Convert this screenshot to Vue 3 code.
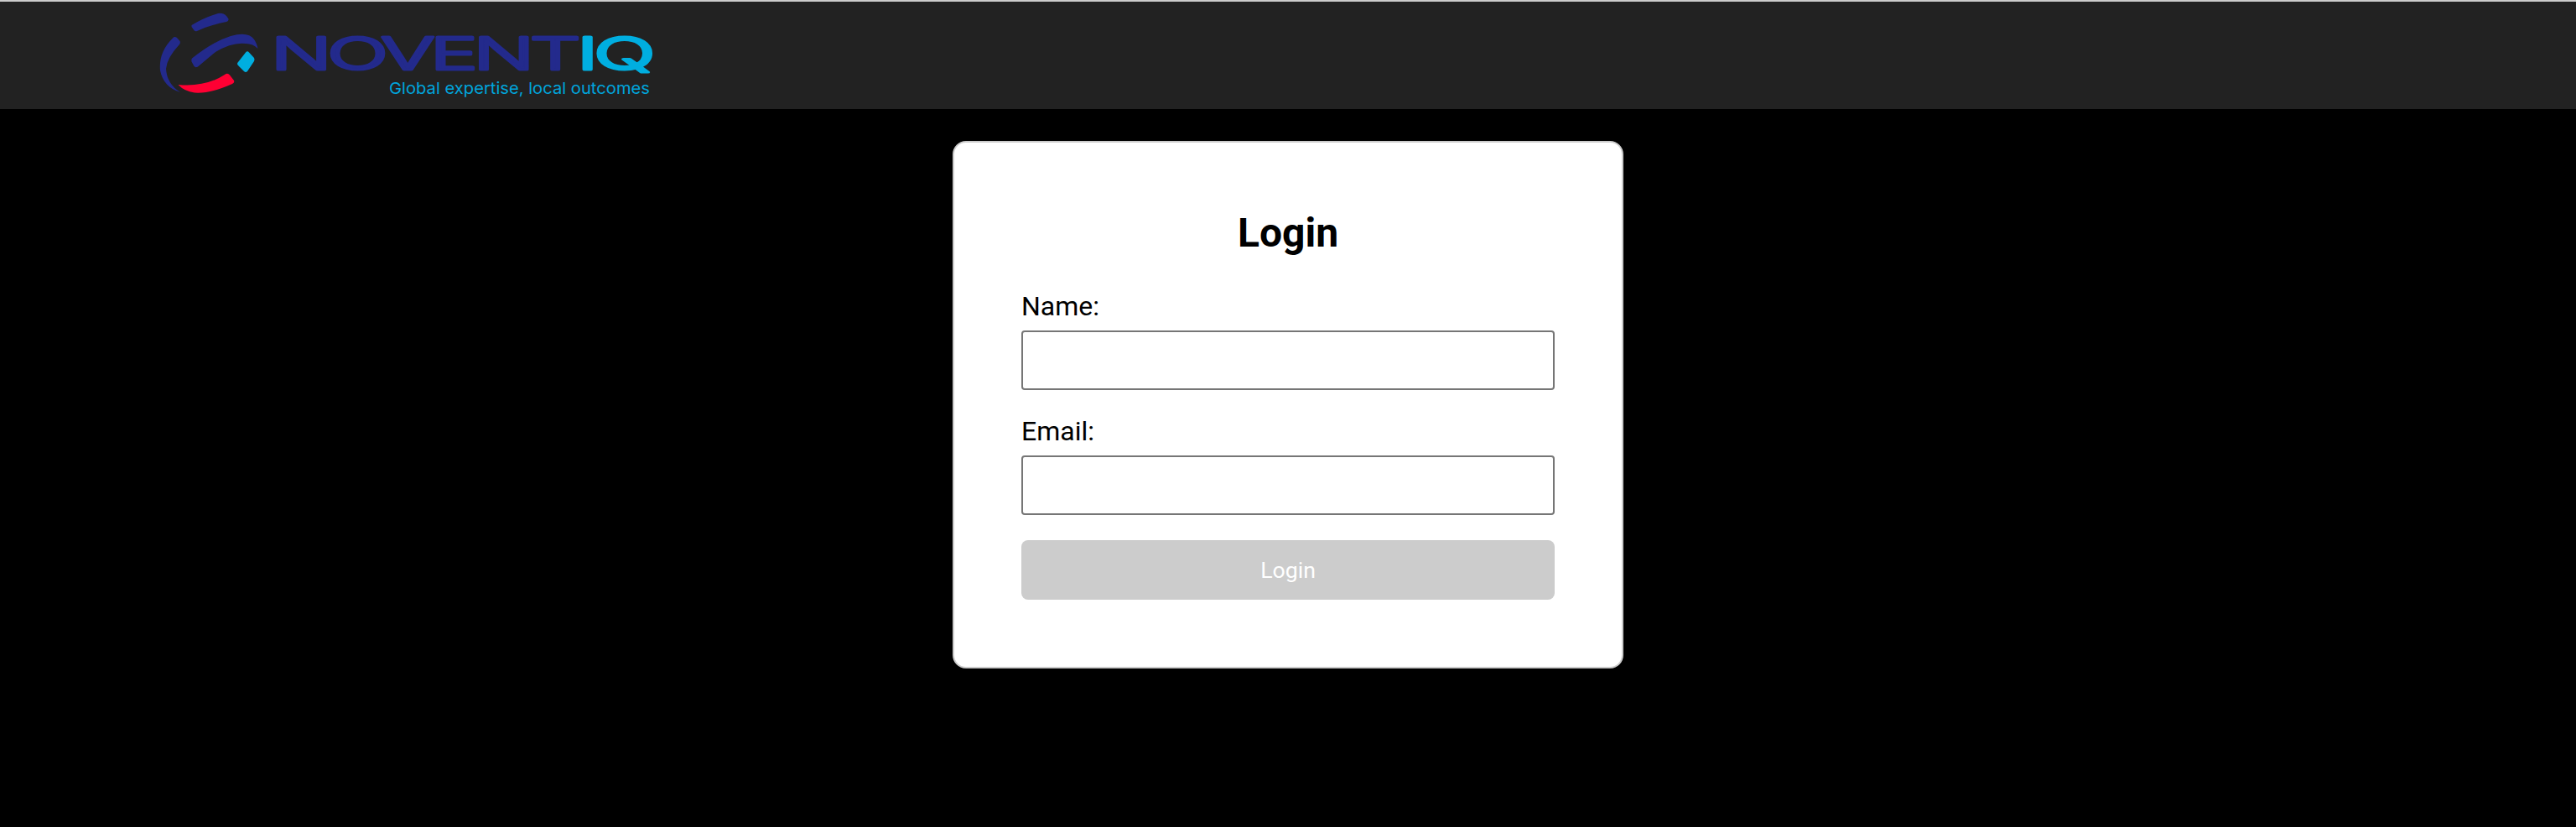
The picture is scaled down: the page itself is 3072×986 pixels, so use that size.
<template>
  <header class="topbar">
    <svg class="logo" width="610" height="110" viewBox="190 10 610 110" role="img" aria-label="Noventiq">
      <path class="navy" d="M228.5 30Q243 21 260 16Q266 15 270 19L272.5 22.5Q273 25 270 26Q250 30 235 37Q232 38 231 35.5L228.5 32Z" />
      <path class="navy" d="M206 45.5Q208 43 211 45L214.5 49Q215.5 51 214 53Q199 69 198 82Q199 100 215 110Q195 104 191 84Q189 62 206 45.5Z" />
      <path class="navy" d="M229 69.5Q253 50 275 43Q296 37 303 47Q306 51 307.5 58Q302 52 293 52Q277 50 257 62L236 79.5Q233 81 231.5 79L228.5 73.5Q228 71 229 69.5Z" />
      <path class="cyan" d="M293 62.5Q295 60 297 62.5L303 69Q304 71 303 73L295 85Q293 87 291 85L284 78Q282 76 284 74Z" />
      <path class="red" d="M212.5 101Q245 104 268 89Q271.5 86.5 274 89.5L279 96Q280 98.5 277 100Q250 112 232 110.5Q220 109 212.5 101Z" />
      <text class="wordmark navy" x="323" y="83" textLength="364" lengthAdjust="spacingAndGlyphs">NOVENT</text>
      <text class="wordmark cyan" x="688" y="83" textLength="88" lengthAdjust="spacingAndGlyphs">IQ</text>
      <text class="tagline" x="464" y="112" textLength="311" lengthAdjust="spacingAndGlyphs">Global expertise, local outcomes</text>
    </svg>
  </header>

  <main class="page">
    <form class="card" @submit.prevent>
      <h2>Login</h2>
      <div class="field">
        <label for="name">Name:</label>
        <input id="name" v-model="name" type="text" />
      </div>
      <div class="field">
        <label for="email">Email:</label>
        <input id="email" v-model="email" type="email" />
      </div>
      <button type="submit" :disabled="!name || !email">Login</button>
    </form>
  </main>
</template>

<script setup>
import { ref } from 'vue'

const name = ref('')
const email = ref('')
</script>

<style>
html,
body {
  margin: 0;
  background: #000;
}
</style>

<style scoped>
.topbar {
  box-sizing: border-box;
  height: 130px;
  padding: 8px 0 0 190px;
  background: #222;
  border-top: 2px solid #ccc;
}

.logo {
  display: block;
}

.navy {
  fill: #232a8c;
  stroke: none;
}

.cyan {
  fill: #00aee0;
}

.red {
  fill: #ff0033;
}

.wordmark {
  font-family: Inter, sans-serif;
  font-size: 53px;
  font-weight: 300;
  letter-spacing: -3px;
  stroke-width: 3px;
  stroke-linejoin: round;
}

.wordmark.navy {
  stroke: #232a8c;
}

.wordmark.cyan {
  stroke: #00aee0;
}

.tagline {
  font-family: Inter, sans-serif;
  font-size: 19px;
  fill: #00a5dc;
}

.page {
  display: flex;
  justify-content: center;
  padding-top: 38px;
  font-family: Roboto, sans-serif;
}

.card {
  box-sizing: border-box;
  width: 800px;
  height: 629px;
  padding: 80px;
  background: #fff;
  border: 2px solid #ccc;
  border-radius: 16px;
}

h2 {
  margin: 0 0 40px;
  font-size: 48px;
  line-height: 56px;
  font-weight: 700;
  text-align: center;
  color: #000;
}

.field {
  margin-bottom: 30px;
}

label {
  display: block;
  margin-bottom: 10px;
  font-size: 32px;
  line-height: 38px;
  color: #000;
}

input {
  display: block;
  box-sizing: border-box;
  width: 100%;
  height: 71px;
  background: #fff;
  border: 2px solid #767676;
  border-radius: 4px;
}

button {
  display: block;
  width: 100%;
  height: 71px;
  padding: 0;
  font-family: Roboto, sans-serif;
  font-size: 26.67px;
  color: #fff;
  background: #ccc;
  border: 0;
  border-radius: 8px;
}
</style>
